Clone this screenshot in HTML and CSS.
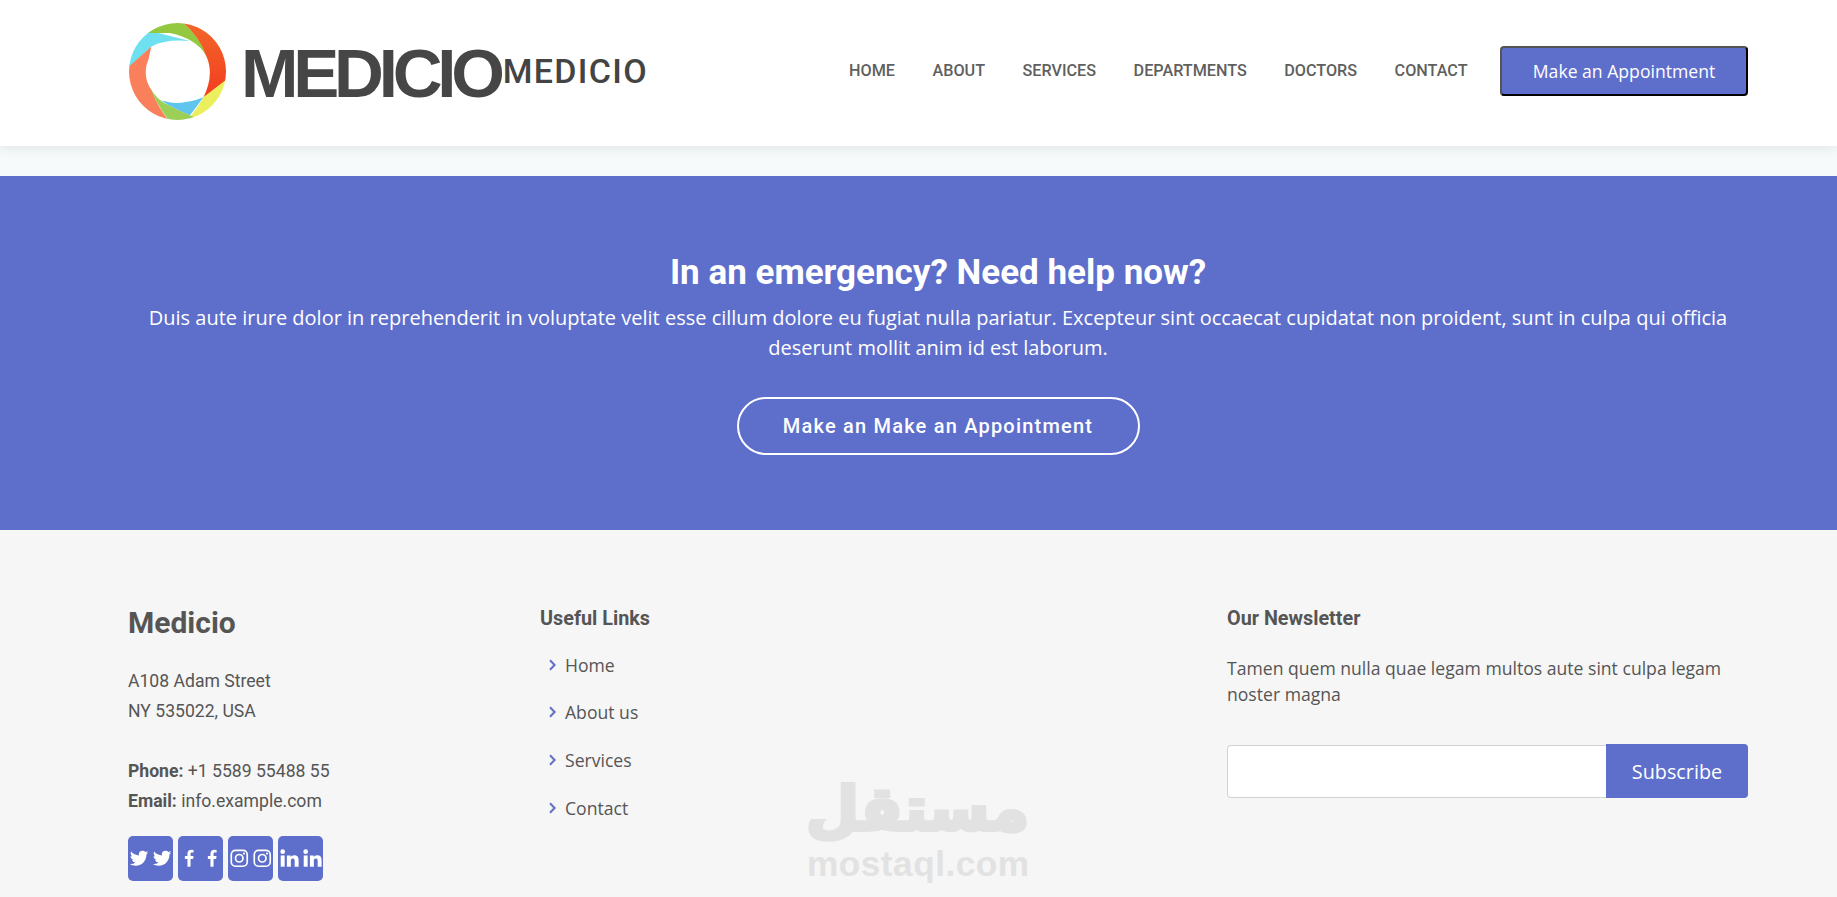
FILE: index.html
```html
<!DOCTYPE html>
<html lang="en">

<head>
    <meta charset="UTF-8">
    <meta name="viewport" content="width=device-width, initial-scale=1.0">
    <title>Medicio</title>
    <link rel="stylesheet" href="styles.css">
</head>

<body>
    <svg class="icon-defs" width="0" height="0">
        <symbol id="i-twitter" viewBox="0 0 24 24">
            <path fill="currentColor" d="M19.633 7.997c.013.175.013.349.013.523 0 5.325-4.053 11.461-11.46 11.461-2.282 0-4.402-.661-6.186-1.809.324.037.636.05.973.05a8.07 8.07 0 0 0 5.001-1.721 4.036 4.036 0 0 1-3.767-2.793c.249.037.499.062.761.062.361 0 .724-.05 1.061-.137a4.027 4.027 0 0 1-3.23-3.953v-.05c.537.299 1.16.486 1.82.511a4.022 4.022 0 0 1-1.796-3.354c0-.748.199-1.434.548-2.032a11.457 11.457 0 0 0 8.306 4.215c-.062-.3-.1-.611-.1-.923a4.026 4.026 0 0 1 4.028-4.028c1.16 0 2.207.486 2.943 1.272a7.957 7.957 0 0 0 2.556-.973 4.02 4.02 0 0 1-1.771 2.22 8.073 8.073 0 0 0 2.319-.624 8.645 8.645 0 0 1-2.019 2.083z"/>
        </symbol>
        <symbol id="i-facebook" viewBox="0 0 24 24">
            <path fill="currentColor" d="M13.397 20.997v-8.196h2.765l.411-3.209h-3.176V7.548c0-.926.258-1.56 1.587-1.56h1.684V3.127A22.336 22.336 0 0 0 14.201 3c-2.444 0-4.122 1.492-4.122 4.231v2.355H7.332v3.209h2.753v8.202h3.312z"/>
        </symbol>
        <symbol id="i-instagram" viewBox="0 0 24 24">
            <rect x="3.5" y="3.5" width="17" height="17" rx="4.5" fill="none" stroke="currentColor" stroke-width="1.8"/>
            <circle cx="12" cy="12" r="4" fill="none" stroke="currentColor" stroke-width="1.8"/>
            <circle cx="17" cy="7" r="1.2" fill="currentColor"/>
        </symbol>
        <symbol id="i-linkedin" viewBox="0 0 24 24">
            <circle cx="4.98" cy="5" r="2.5" fill="currentColor"/>
            <rect x="2.9" y="9" width="4.2" height="12" fill="currentColor"/>
            <path fill="currentColor" d="M9.5 9h4v1.7c.6-1 1.9-2 3.8-2 4 0 4.7 2.6 4.7 6V21h-4.2v-5.6c0-1.4 0-3.2-2-3.2s-2.1 1.5-2.1 3.1V21H9.5z"/>
        </symbol>
        <symbol id="i-chevron" viewBox="0 0 7 12">
            <path d="M1 1.2l4.6 4.8L1 10.8" fill="none" stroke="currentColor" stroke-width="2"/>
        </symbol>
    </svg>

    <header class="site-header">
        <a class="logo" href="#">
            <svg class="logo-ring" viewBox="28 38 290 290" width="97" height="97">
                <defs>
                    <clipPath id="ring-clip">
                        <path clip-rule="evenodd" d="M173 38a145 145 0 1 0 .01 0zM170 93a92 92 0 1 1-.01 0z"/>
                    </clipPath>
                    <linearGradient id="ring-red" x1="0" y1="0" x2="0" y2="1">
                        <stop offset="0" stop-color="#f1682a"/>
                        <stop offset="1" stop-color="#f43c1e"/>
                    </linearGradient>
                </defs>
                <g clip-path="url(#ring-clip)">
                    <path fill="#f9805a" d="M20 170L95 108Q60 220 150 335L20 335z"/>
                    <path fill="#6fe0ef" d="M20 175Q40 90 83 60L210 92Q140 85 95 108z"/>
                    <path fill="#94c93f" d="M83 68Q130 30 190 38Q245 85 258 135Q230 85 150 68z"/>
                    <path fill="url(#ring-red)" d="M190 30L325 30L325 203L250 262Q285 190 258 135Q240 80 190 38z"/>
                    <path fill="#ebee5d" d="M325 203L325 335L205 325Q235 290 250 260z"/>
                    <path fill="#60c5ee" d="M125 270Q190 285 250 260Q230 290 210 314Q160 295 125 270z"/>
                    <path fill="#9ccf55" d="M85 218Q100 255 130 275Q170 298 210 314L228 322L150 335Q110 280 85 218z"/>
                </g>
            </svg>
            <span class="logo-mark">MEDICIO</span>
            <span class="logo-name">MEDICIO</span>
        </a>
        <nav class="main-nav">
            <a href="#">HOME</a>
            <a href="#">ABOUT</a>
            <a href="#">SERVICES</a>
            <a href="#">DEPARTMENTS</a>
            <a href="#">DOCTORS</a>
            <a href="#">CONTACT</a>
            <button class="appointment-btn">Make an Appointment</button>
        </nav>
    </header>

    <section class="cta">
        <h3>In an emergency? Need help now?</h3>
        <p>Duis aute irure dolor in reprehenderit in voluptate velit esse cillum dolore eu fugiat nulla pariatur. Excepteur sint occaecat cupidatat non proident, sunt in culpa qui officia deserunt mollit anim id est laborum.</p>
        <a class="cta-btn" href="#">Make an Make an Appointment</a>
    </section>

    <footer class="site-footer">
        <div class="footer-col">
            <h3 class="footer-brand">Medicio</h3>
            <p class="address">A108 Adam Street<br>NY 535022, USA</p>
            <p class="address"><strong>Phone:</strong> +1 5589 55488 55<br><strong>Email:</strong> info.example.com</p>
            <div class="social">
                <a href="#"><svg><use href="#i-twitter"/></svg><svg><use href="#i-twitter"/></svg></a>
                <a href="#"><svg><use href="#i-facebook"/></svg><svg><use href="#i-facebook"/></svg></a>
                <a href="#"><svg><use href="#i-instagram"/></svg><svg><use href="#i-instagram"/></svg></a>
                <a href="#"><svg><use href="#i-linkedin"/></svg><svg><use href="#i-linkedin"/></svg></a>
            </div>
        </div>
        <div class="footer-col">
            <h4>Useful Links</h4>
            <ul class="footer-links">
                <li><svg><use href="#i-chevron"/></svg><a href="#">Home</a></li>
                <li><svg><use href="#i-chevron"/></svg><a href="#">About us</a></li>
                <li><svg><use href="#i-chevron"/></svg><a href="#">Services</a></li>
                <li><svg><use href="#i-chevron"/></svg><a href="#">Contact</a></li>
            </ul>
        </div>
        <div class="footer-col">
            <h4>Our Newsletter</h4>
            <p class="news-text">Tamen quem nulla quae legam multos aute sint culpa legam noster magna</p>
            <form class="news-form">
                <input type="email">
                <button type="button">Subscribe</button>
            </form>
        </div>
        <div class="watermark">
            <span class="wm-ar" lang="ar" dir="rtl">مستقل</span>
            <span class="wm-en">mostaql.com</span>
        </div>
    </footer>
</body>

</html>
```

FILE: styles.css
```css
* {
    box-sizing: border-box;
}

html,
body {
    height: 897px;
    overflow: hidden;
}

body {
    margin: 0;
    background: #f6fafa;
    color: #444444;
    font-family: "Open Sans", sans-serif;
}

a {
    color: inherit;
    text-decoration: none;
}

.icon-defs {
    position: absolute;
}

/* header */
.site-header {
    display: flex;
    align-items: center;
    justify-content: space-between;
    height: 146px;
    padding: 0 89px 4px 129px;
    background: #fff;
    box-shadow: 0 2px 12px rgba(0, 0, 0, 0.09);
}

.logo {
    display: flex;
    align-items: center;
}

.logo-ring {
    flex: none;
    margin-right: 15px;
}

.logo-mark {
    margin-top: 4px;
    font-family: "Liberation Sans", sans-serif;
    font-size: 69px;
    font-weight: 700;
    letter-spacing: -5.2px;
    line-height: 1;
    color: #464646;
}

.logo-name {
    font-family: Roboto, sans-serif;
    font-size: 34px;
    font-weight: 500;
    letter-spacing: 1.3px;
    margin-left: 3px;
    color: #444444;
}

.main-nav {
    display: flex;
    align-items: center;
    gap: 37.5px;
    font-family: Roboto, sans-serif;
    font-size: 16.2px;
    font-weight: 500;
    color: #5f5f5f;
}

.main-nav a {
    margin-top: -2px;
}

.appointment-btn {
    width: 248px;
    height: 50px;
    margin-left: -5px;
    background: #5e6ecb;
    color: #fff;
    border: 2px outset #000;
    border-radius: 4px;
    font-family: "Open Sans", sans-serif;
    font-size: 17.6px;
    font-weight: 400;
}

/* call to action */
.cta {
    height: 354px;
    margin-top: 30px;
    padding: 75px 89px 0 128px;
    background: #5e6ecb;
    color: #fff;
    text-align: center;
}

.cta h3 {
    margin: 0 0 8px;
    font-family: Roboto, sans-serif;
    font-size: 35px;
    font-weight: 700;
    line-height: 44px;
}

.cta p {
    margin: 0 0 34px;
    font-size: 20px;
    line-height: 30px;
}

.cta-btn {
    display: inline-block;
    width: 403px;
    height: 58px;
    border: 2px solid #fff;
    border-radius: 50px;
    font-family: Roboto, sans-serif;
    font-size: 20px;
    font-weight: 500;
    letter-spacing: 1.2px;
    line-height: 54px;
}

/* footer */
.site-footer {
    position: relative;
    display: grid;
    grid-template-columns: 412px 687px 521px;
    height: 367px;
    padding: 71px 0 0 128px;
    background: #f6f6f6;
    color: #555555;
}

.footer-brand {
    margin: 0 0 21px;
    font-family: Roboto, sans-serif;
    font-size: 30px;
    font-weight: 700;
    line-height: 44px;
}

.address {
    margin: 0 0 30px;
    font-family: Roboto, sans-serif;
    font-size: 17.6px;
    line-height: 30px;
}

.social {
    display: flex;
    gap: 5px;
    margin-top: -10px;
}

.social a {
    display: flex;
    align-items: center;
    justify-content: center;
    width: 45px;
    height: 45px;
    border-radius: 5px;
    background: #5e6ecb;
    color: #fff;
}

.social svg {
    width: 22.5px;
    height: 22.5px;
}

.footer-col h4 {
    margin: 0;
    font-family: Roboto, sans-serif;
    font-size: 19.8px;
    font-weight: 700;
    line-height: 36px;
}

.footer-links {
    list-style: none;
    margin: 4px 0 0;
    padding: 0;
}

.footer-links li {
    display: flex;
    align-items: center;
    height: 47.6px;
    padding-left: 9px;
    font-size: 17.6px;
}

.footer-links svg {
    width: 7px;
    height: 12px;
    margin-right: 9px;
    color: #5e6ecb;
}

.news-text {
    margin: 18px 0 37px;
    font-size: 17.6px;
    line-height: 26px;
}

.news-form {
    display: flex;
    align-items: stretch;
    height: 54px;
}

.news-form input {
    width: 379px;
    margin-top: 1px;
    padding: 0 10px;
    background: #fff;
    border: 1px solid #d3d3d3;
    border-right: 0;
    border-radius: 4px 0 0 4px;
}

.news-form button {
    width: 142px;
    background: #5e6ecb;
    color: #fff;
    border: 0;
    border-radius: 0 4px 4px 0;
    font-family: "Open Sans", sans-serif;
    font-size: 19.8px;
}

/* mostaql stamp lies over the footer */
.watermark {
    position: absolute;
    left: 807px;
    top: 242px;
    width: 222px;
    color: #e2e2e2;
    text-align: center;
    font-weight: 700;
    line-height: 1;
}

.wm-ar {
    display: block;
    font-family: "DejaVu Sans", sans-serif;
    font-size: 61px;
    line-height: 74px;
    -webkit-text-stroke: 4px #e2e2e2;
}

.wm-en {
    display: block;
    font-family: "Liberation Sans", sans-serif;
    font-size: 35.2px;
    letter-spacing: 0.5px;
}
```
